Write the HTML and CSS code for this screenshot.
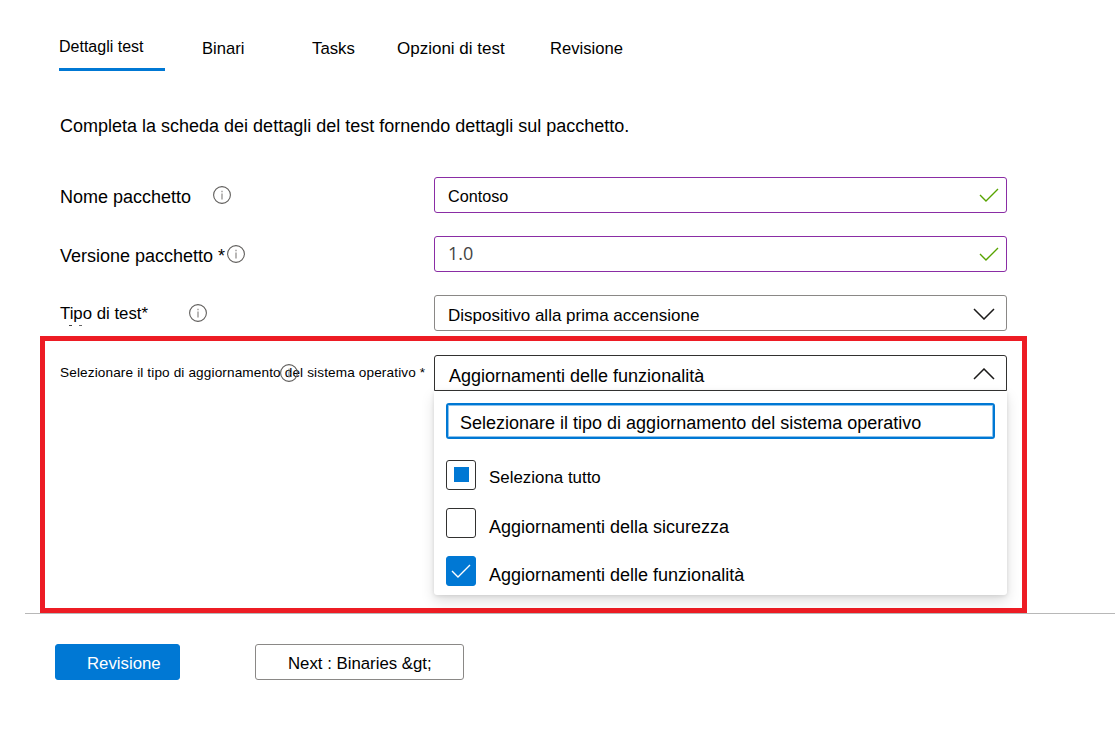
FILE: index.html
```html
<!DOCTYPE html>
<html lang="it">
<head>
<meta charset="utf-8">
<title>Dettagli test</title>
<link rel="stylesheet" href="styles.css">
</head>
<body>
<svg class="defs" width="0" height="0">
  <symbol id="info" viewBox="0 0 18 18">
    <circle cx="9" cy="9" r="8.4" fill="none" stroke="#605e5c" stroke-width="1.1"/>
    <path d="M9 7.6v5.8M9 4.7v1.6" fill="none" stroke="#8a8886" stroke-width="1.2"/>
  </symbol>
  <symbol id="check" viewBox="0 0 20 14">
    <path d="M1 7l6 6L19 1" fill="none" stroke="currentColor" stroke-width="1.4"/>
  </symbol>
  <symbol id="chevron" viewBox="0 0 22 12">
    <path d="M1 1l10 10L21 1" fill="none" stroke="#1b1a19" stroke-width="1.5"/>
  </symbol>
</svg>

<nav class="tabs">
  <a class="tab tab-details">Dettagli test</a>
  <a class="tab tab-binaries">Binari</a>
  <a class="tab tab-tasks">Tasks</a>
  <a class="tab tab-options">Opzioni di test</a>
  <a class="tab tab-review">Revisione</a>
</nav>

<p class="intro">Completa la scheda dei dettagli del test fornendo dettagli sul pacchetto.</p>

<main class="form">
  <div class="row">
    <div class="label"><span class="label-text">Nome pacchetto</span><svg class="info info-name"><use href="#info"/></svg></div>
    <div class="field valid"><span class="value value-name">Contoso</span><svg class="check"><use href="#check"/></svg></div>
  </div>
  <div class="row">
    <div class="label"><span class="label-text">Versione pacchetto *</span><svg class="info info-version"><use href="#info"/></svg></div>
    <div class="field valid"><span class="value value-version">1.0</span><svg class="check"><use href="#check"/></svg></div>
  </div>
  <div class="row">
    <div class="label"><span class="label-text label-type">Tipo di test*</span><svg class="info info-type"><use href="#info"/></svg><i class="trace"></i></div>
    <div class="field"><span class="value value-type">Dispositivo alla prima accensione</span><svg class="chevron"><use href="#chevron"/></svg></div>
  </div>
</main>

<section class="highlight">
  <div class="row">
    <div class="label"><span class="label-text label-os">Selezionare il tipo di aggiornamento del sistema operativo *</span><svg class="info info-os"><use href="#info"/></svg></div>
    <div class="field open"><span class="value value-os">Aggiornamenti delle funzionalità</span><svg class="chevron up"><use href="#chevron"/></svg></div>
  </div>
  <div class="menu">
    <div class="search"><span class="search-text">Selezionare il tipo di aggiornamento del sistema operativo</span></div>
    <div class="option"><span class="box partial"></span><span class="option-text option-all">Seleziona tutto</span></div>
    <div class="option"><span class="box"></span><span class="option-text">Aggiornamenti della sicurezza</span></div>
    <div class="option"><span class="box checked"><svg class="tick"><use href="#check"/></svg></span><span class="option-text">Aggiornamenti delle funzionalità</span></div>
  </div>
</section>

<footer class="footer">
  <button class="button primary">Revisione</button>
  <button class="button">Next : Binaries &amp;gt;</button>
</footer>
</body>
</html>
```
FILE: styles.css
```css
* { box-sizing: border-box; }

body {
  margin: 0;
  height: 733px;
  overflow: hidden;
  background: #fff;
  color: #000;
  font-family: "Liberation Sans", Arial, sans-serif;
  font-size: 18px;
  white-space: nowrap;
}

.defs { display: block; height: 0; }
svg { flex: none; }

.tabs {
  display: flex;
  height: 71px;
  padding: 30px 0 0 59px;
  font-size: 16.6px;
  line-height: 38px;
}
.tab { flex: none; }
.tab-details {
  width: 106px;
  height: 41px;
  border-bottom: 3px solid #0078d4;
  font-size: 16px;
  line-height: 33px;
}
.tab-binaries { width: 110px; margin-left: 37px; }
.tab-tasks { width: 85px; font-size: 16.8px; }
.tab-options { width: 153px; font-size: 17px; }

.intro {
  margin: 0;
  padding: 37px 0 0 60px;
  height: 106px;
  line-height: 36px;
}

.form {
  display: flex;
  flex-direction: column;
  gap: 23px;
  padding-left: 60px;
}

.row { display: flex; height: 36px; }

.label {
  position: relative;
  display: flex;
  flex: none;
  width: 374px;
  line-height: 36px;
}
.label-text { margin-top: 2px; }
.label-type { margin-top: 1px; font-size: 16.8px; }
.label-os { margin-top: 0; font-size: 13.6px; letter-spacing: 0.13px; }

.info { width: 18px; height: 18px; margin-top: 9.4px; }
.info-name { margin-left: 22px; }
.info-version { margin-left: 1.5px; }
.info-type { margin-left: 41px; }
.info-os { position: absolute; left: 220px; top: 0; }

/* clipped remainder of the label's second line */
.trace {
  position: absolute;
  left: 9px;
  top: 30px;
  width: 3px;
  height: 1px;
  background: #444;
  box-shadow: 10px 0 #666;
}

.field {
  display: flex;
  flex: none;
  justify-content: space-between;
  width: 573px;
  height: 36px;
  padding: 0 8px 0 12px;
  border: 1px solid #8a8886;
  border-radius: 3px;
  line-height: 34px;
}
.field.valid { border-color: #8a2da5; }
.field.open { border-color: #323130; border-radius: 3px 3px 0 0; }
.value { margin-top: 2px; }
.value-name { margin: 1px 0 0 1px; font-size: 16.2px; }
.value-version {
  margin: -1px 0 0 1px;
  color: #444;
  font-family: "Open Sans", sans-serif;
  font-size: 18px;
}
.value-type { margin: 3px 0 0 1px; font-size: 17px; }
.value-os { margin: 3px 0 0 2px; }

.check { width: 20px; height: 14px; margin-top: 10px; margin-right: -1px; color: #57a300; }
.chevron { width: 22px; height: 12px; margin: 12px 3px 0 0; }
.chevron.up { transform: rotate(180deg); }

.highlight {
  width: 987px;
  height: 277px;
  margin: 5px 0 0 40px;
  padding: 14px 0 0 15px;
  border: 5px solid #ed1c24;
}

.menu {
  width: 573px;
  height: 204px;
  margin-left: 374px;
  padding: 12px;
  border-radius: 0 0 3px 3px;
  background: #fff;
  box-shadow: 0 6px 14px rgba(0, 0, 0, 0.13), 0 1px 4px rgba(0, 0, 0, 0.11);
}
.search {
  display: flex;
  height: 36px;
  margin-bottom: 21px;
  padding-left: 12px;
  border: 2px solid #0078d4;
  border-radius: 3px;
  box-shadow: inset 0 0 0 1px #8cc2ec;
  line-height: 32px;
}
.search-text { margin-top: 2px; }

.option { display: flex; height: 30px; margin-bottom: 18px; line-height: 30px; }
.box {
  display: flex;
  flex: none;
  align-items: center;
  justify-content: center;
  width: 30px;
  height: 30px;
  margin-right: 13px;
  border: 1px solid #323130;
  border-radius: 3px;
}
.partial::before { content: ""; width: 15px; height: 15px; margin-bottom: 1px; background: #0078d4; }
.checked { border-color: #0078d4; background: #0078d4; color: #fff; }
.tick { width: 20px; height: 14px; }
.option-text { margin-top: 4px; }
.option-all { margin-top: 3px; font-size: 16.9px; }

.footer {
  display: flex;
  gap: 75px;
  margin-left: 25px;
  padding: 30px 0 0 30px;
  border-top: 1px solid #b8b8b8;
}
.button {
  width: 209px;
  height: 36px;
  padding: 3px 0 0 32px;
  border: 1px solid #8a8886;
  border-radius: 3px;
  background: #fff;
  color: #000;
  font: 16.8px "Liberation Sans", Arial, sans-serif;
  text-align: left;
}
.button.primary { width: 125px; padding-left: 31px; border-color: #0078d4; background: #0078d4; color: #fff; }
```
